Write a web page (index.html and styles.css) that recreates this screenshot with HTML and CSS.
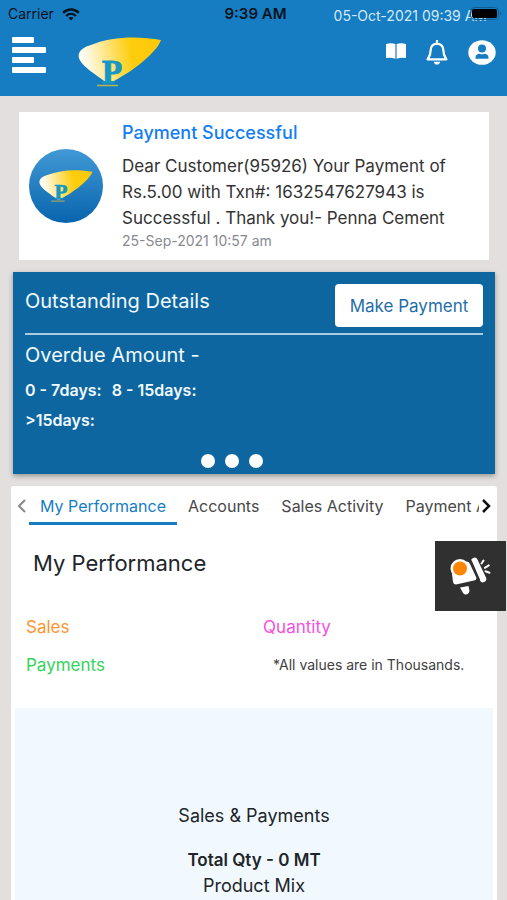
FILE: index.html
```html
<!DOCTYPE html>
<html lang="en">
<head>
<meta charset="utf-8">
<meta name="viewport" content="width=device-width, initial-scale=1">
<title>Penna Cement</title>
<link rel="stylesheet" href="styles.css">
</head>
<body>
<svg width="0" height="0" class="defs" aria-hidden="true">
  <defs>
    <linearGradient id="gold" x1="0" y1="0.5" x2="1" y2="0.4">
      <stop offset="0" stop-color="#fff"/>
      <stop offset="0.12" stop-color="#fff8df"/>
      <stop offset="0.65" stop-color="#fdcd0c"/>
      <stop offset="1" stop-color="#fdc90a"/>
    </linearGradient>
    <symbol id="logo" viewBox="0 0 84 52">
      <path d="M29 47C20 40 3 30 1 22C-1 15 6 11 13 9C34 0 62 0 83 4C79 16 56 35 32 47Z" fill="url(#gold)"/>
      <text x="24" y="47" class="logo-letter">P</text>
      <path d="M19 49.500H40" stroke="#b9b54a" stroke-width="1.500"/>
    </symbol>
  </defs>
</svg>
<header class="header">
  <div class="status">
    <span class="carrier">Carrier
      <svg width="18" height="13" viewBox="0 0 18 13" aria-hidden="true"><g fill="none" stroke="#06121c" stroke-width="2.400"><path d="M1.200 4.800C5.500 0.400 12.500 0.400 16.800 4.800"/><path d="M4.200 8C7 5.200 11 5.200 13.800 8"/></g><path d="M9 12.500L6.400 9.800C7.800 8.600 10.200 8.600 11.600 9.800Z" fill="#06121c"/></svg>
    </span>
    <strong class="clock">9:39 AM</strong>
    <span class="stamp">05-Oct-2021 09:39 AM
      <svg class="battery" width="32" height="14" viewBox="0 0 32 14" aria-hidden="true"><rect x="0.500" y="0.500" width="28" height="12" rx="4" fill="none" stroke="#125b90"/><rect x="2" y="2" width="25" height="9" rx="2" fill="#000"/><path d="M30 4.500C31.500 5 31.500 8 30 8.500Z" fill="#125b90"/></svg>
    </span>
  </div>
  <div class="bar">
    <button class="icon-button" aria-label="Menu">
      <svg width="36" height="36" viewBox="0 0 36 36" fill="#fff"><rect x="1" y="0" width="22" height="6" rx="1"/><rect x="1" y="10" width="34" height="6" rx="1"/><rect x="1" y="20" width="22" height="6" rx="1"/><rect x="1" y="30" width="34" height="6" rx="1"/></svg>
    </button>
    <svg class="brand" width="84" height="52" role="img" aria-label="Penna Cement"><use href="#logo"/></svg>
    <nav class="actions" aria-label="Account">
      <button class="icon-button" aria-label="Catalogue">
        <svg width="20" height="20" viewBox="0 0 20 20" fill="#fff"><path d="M0 1Q5-.6 9.400 1V15.700Q5 14 0 15Z"/><path d="M20 1Q15-.6 10.600 1V15.700Q15 14 20 15Z"/></svg>
      </button>
      <button class="icon-button" aria-label="Notifications">
        <svg width="22" height="25" viewBox="0 0 22 25"><path d="M11 1V4M11 3.600C6.500 3.600 4.600 7 4.600 10.500C4.600 15.500 3.200 17 1.600 19.300H20.400C18.800 17 17.400 15.500 17.400 10.500C17.400 7 15.500 3.600 11 3.600Z" fill="none" stroke="#fff" stroke-width="2.300" stroke-linejoin="round" stroke-linecap="round"/><path d="M7.800 21.700H14.200C13.600 25.500 8.400 25.500 7.800 21.700Z" fill="#fff"/></svg>
      </button>
      <button class="icon-button" aria-label="Profile">
        <svg width="28" height="25" viewBox="0 0 28 25"><ellipse cx="14" cy="12.500" rx="13.700" ry="12.300" fill="#fff"/><circle cx="14" cy="8.500" r="4" fill="#167dc2"/><path d="M7.500 18.800V17.500C7.500 15 9.500 13.800 11.500 13.800Q14 14.800 16.500 13.800C18.500 13.800 20.500 15 20.500 17.500V18.800Z" fill="#167dc2"/></svg>
      </button>
    </nav>
  </div>
</header>
<main class="content">
  <article class="notice">
    <div class="avatar"><svg width="54" height="34" aria-hidden="true"><use href="#logo"/></svg></div>
    <div class="notice-body">
      <h2>Payment Successful</h2>
      <p>Dear Customer(95926) Your Payment of Rs.5.00 with Txn#: 1632547627943 is Successful . Thank you!- Penna Cement</p>
      <time datetime="2021-09-25T10:57">25-Sep-2021 10:57 am</time>
    </div>
  </article>
  <section class="outstanding">
    <div class="outstanding-head">
      <h2>Outstanding Details</h2>
      <button class="pay">Make Payment</button>
    </div>
    <h3>Overdue Amount -</h3>
    <div class="ages"><span>0 - 7days:</span><span>8 - 15days:</span><span>&gt;15days:</span></div>
    <div class="dots"><button aria-label="Slide 1"></button><button aria-label="Slide 2"></button><button aria-label="Slide 3"></button></div>
  </section>
  <section class="panel">
    <div class="tabs">
      <button class="arrow" aria-label="Previous tabs"><svg width="10" height="14" viewBox="0 0 10 14"><path d="M8 1L2 7L8 13" fill="none" stroke="#888" stroke-width="2"/></svg></button>
      <div class="tab-list" role="tablist">
        <button role="tab" class="tab active" aria-selected="true">My Performance</button>
        <button role="tab" class="tab">Accounts</button>
        <button role="tab" class="tab">Sales Activity</button>
        <button role="tab" class="tab">Payment A</button>
      </div>
      <button class="arrow" aria-label="Next tabs"><svg width="10" height="14" viewBox="0 0 10 14"><path d="M2 1L8 7L2 13" fill="none" stroke="#111" stroke-width="2.500"/></svg></button>
    </div>
    <h1>My Performance</h1>
    <div class="legend">
      <span class="sales">Sales</span><span class="quantity">Quantity</span>
      <span class="payments">Payments</span><small>*All values are in Thousands.</small>
    </div>
    <div class="chart">
      <p>Sales &amp; Payments</p>
      <p class="total">Total Qty - 0 MT</p>
      <p>Product Mix</p>
    </div>
  </section>
</main>
<button class="announce" aria-label="Announcements">
  <svg width="42" height="40" viewBox="0 0 42 40"><g fill="#fff"><circle cx="10" cy="12.500" r="9.500"/><path d="M2 18L17 5.500Q19 5.500 20 8L26.500 22Q26.500 24 24 24.500L6 28.500Q3.500 28.500 3 26Z"/><path d="M10 31.500L18.500 30L19.500 35Q18.500 39 15 38.500Q13.500 38 12.800 36.500Z"/></g><path d="M24.500 5L33 23" stroke="#fff" stroke-width="6.500" stroke-linecap="round"/><path d="M31.500 7.500L33.500 4.500M34.800 11.800L38.800 9.400M35.500 15.200L39.500 16.700" stroke="#fff" stroke-width="2" stroke-linecap="round"/><path d="M21 4.500L29.500 24" stroke="#303030" stroke-width="1.300"/><circle cx="10" cy="12.500" r="7" fill="#ff8503"/></svg>
</button>
</body>
</html>
```

FILE: styles.css
```css
* { box-sizing: border-box; }
body {
  margin: 0;
  min-height: 100vh;
  display: flex;
  flex-direction: column;
  background: #e2dfde;
  color: #212529;
  font-family: Inter, "Liberation Sans", sans-serif;
  font-size: 17px;
  line-height: 24px;
  overflow-x: hidden;
}
h1, h2, h3, p { margin: 0; font-weight: 400; }
button { border: 0; padding: 0; background: none; font: inherit; color: inherit; cursor: pointer; }
svg { display: block; flex: none; }
.defs { position: absolute; }
.header { background: #167dc2; height: 96px; }
.status {
  display: grid;
  grid-template-columns: 1fr auto 1fr;
  align-items: center;
  height: 28px;
  padding: 0 4px 0 8px;
  font-size: 14px;
  color: #06121c;
}
.carrier { display: flex; align-items: center; gap: 8px; }
.clock { font-size: 15px; font-weight: 600; }
.stamp { position: relative; justify-self: end; margin-right: 16px; padding-top: 4px; color: #d3e9f8; white-space: nowrap; }
.battery { position: absolute; right: -15px; top: 7px; }
.bar { display: flex; align-items: flex-start; padding: 8px 11px 0; }
.bar > .icon-button { margin-top: 1px; }
.brand { margin-left: 31px; }
.logo-letter { font: 700 33px "Liberation Serif", serif; fill: #1798c4; stroke: #1798c4; stroke-width: 1px; }
.actions { display: flex; align-items: center; gap: 20px; margin-left: auto; margin-top: 4px; }
.content { flex: 1; display: flex; flex-direction: column; gap: 12px; padding: 16px 10px 0 11px; }
.notice { display: flex; align-items: center; gap: 19px; margin: 0 8px; padding: 8px 10px; min-height: 148px; background: #fff; }
.avatar { display: grid; place-items: center; flex: none; width: 74px; height: 74px; border-radius: 50%; background: linear-gradient(#4199d5, #0864ad); }
.notice h2 { font-size: 18px; font-weight: 500; color: #127df4; }
.notice p { margin-top: 8px; line-height: 26px; color: #333; }
.notice time { display: block; font-size: 14px; line-height: 20px; color: #868a90; }
.outstanding { margin: 0 2px; padding: 12px 12px 6px; min-height: 202px; background: #0e66a0; color: #f1faff; box-shadow: 0 2px 5px #0005; display: flex; flex-direction: column; }
.outstanding-head { display: flex; justify-content: space-between; padding-bottom: 6px; border-bottom: 2px solid #a9cbe2; }
.outstanding h2 { font-size: 20px; line-height: 34px; }
.pay { width: 148px; height: 43px; border-radius: 4px; background: #fff; color: #1f6ea9; }
.outstanding h3 { font-size: 20px; line-height: 28px; margin-top: 6px; }
.ages { display: flex; flex-wrap: wrap; column-gap: 10px; max-width: 220px; margin-top: 6px; font-size: 16px; font-weight: 600; line-height: 30px; }
.dots { display: flex; justify-content: center; gap: 10px; margin-top: auto; padding-right: 44px; }
.dots button { width: 14px; height: 14px; border-radius: 50%; background: #fff; }
.panel { flex: 1; background: #fff; border-radius: 3px 3px 0 0; padding: 0 4px; }
.tabs { display: flex; }
.arrow { display: grid; place-items: center; flex: none; width: 14px; height: 39px; }
.tab-list { display: flex; flex: 1; min-width: 0; overflow: hidden; }
.tab { flex: none; height: 39px; padding: 4px 11px 0; border-bottom: 3px solid transparent; color: #484848; font-size: 16px; white-space: nowrap; }
.active { color: #167dc2; border-color: #167dc2; }
.panel h1 { margin: 22px 18px 0; font-size: 22px; line-height: 32px; }
.legend { display: grid; grid-template-columns: 52% 48%; row-gap: 14px; padding: 36px 11px 0; }
.sales { color: #ff9430; }
.quantity { color: #f650dc; }
.payments { color: #34d45c; }
.legend small { padding-left: 10px; font-size: 14px; color: #404040; }
.chart { margin-top: 31px; padding: 95px 0 1px; min-height: 192px; background: #f1f9fe; text-align: center; font-size: 18px; line-height: 26px; }
.chart .total { margin-top: 18px; font-size: 17px; font-weight: 600; }
.announce { position: fixed; right: 1px; top: 541px; display: grid; place-items: center; width: 71px; height: 70px; background: #303030; }
```
